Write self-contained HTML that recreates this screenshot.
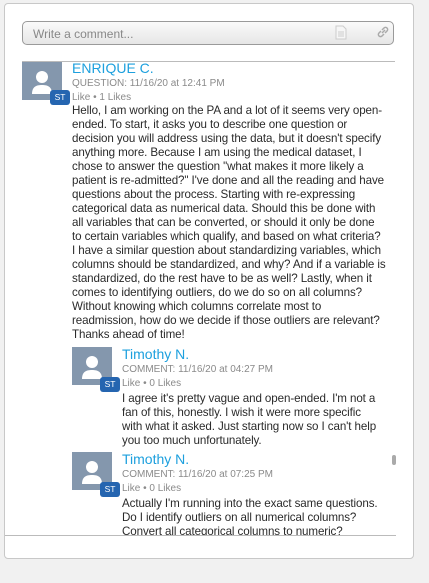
<!DOCTYPE html>
<html><head><meta charset="utf-8"><style>
body{margin:0;width:429px;height:583px;background:#f1f1f1;font-family:"Liberation Sans",sans-serif;overflow:hidden;position:relative}
.card{position:absolute;left:4px;top:3px;width:408px;height:554px;background:#fff;border:1px solid #c8c8c8;border-radius:4px}
.input{position:absolute;left:22px;top:21px;width:372px;height:24px;border:1px solid #9a9a9a;border-radius:5px;background:linear-gradient(#fafafa,#e6e6e6);box-sizing:border-box}
.input span{position:absolute;left:10px;top:5px;font-size:12px;color:#888}
.hr{position:absolute;left:22px;top:61px;width:373px;height:1px;background:#bbb}
.av{position:absolute;width:40px;height:38px;background:#8497ad}
.badge{position:absolute;width:20px;height:15px;background:#2565b0;border-radius:3px;color:#fff;font-size:8.5px;text-align:center;line-height:15px}
.name{position:absolute;color:#1da0de;font-size:14px}
.meta{position:absolute;color:#8a8a8a;font-size:10px}
.text{position:absolute;color:#2a2a2a;font-size:11.6px;line-height:14px;white-space:nowrap;letter-spacing:-0.1px}
.clip{position:absolute;left:0;top:0;width:429px;height:535px;overflow:hidden}
</style></head><body>
<div class="card"></div>
<div class="input"><span>Write a comment...</span>
<svg style="position:absolute;left:312px;top:3px" width="12" height="15" viewBox="0 0 12 15"><path d="M1 1h7l3 3v10H1z" fill="#f6f6f6" stroke="#ccc"/><path d="M3 7h6M3 9h6M3 11h6" stroke="#ccc"/></svg>
<svg style="position:absolute;left:353px;top:3px" width="14" height="14" viewBox="0 0 14 14"><path d="M6 8l3-3M5 6L3 8a2 2 0 0 0 3 3l2-2M9 8l2-2a2 2 0 0 0-3-3L6 5" fill="none" stroke="#aaa" stroke-width="1.5"/></svg>
</div>
<div class="hr"></div>
<div class="clip">
<div class="av" style="left:22px;top:62px"><svg width="40" height="38"><circle cx="20" cy="15" r="6" fill="#fff"/><path d="M10 32c0-7 4-9 10-9s10 2 10 9z" fill="#fff"/></svg></div>
<div class="badge" style="left:50px;top:90px">ST</div>
<div class="name" style="left:72px;top:60px">ENRIQUE C.</div>
<div class="meta" style="left:72px;top:78px">QUESTION: 11/16/20 at 12:41 PM</div>
<div class="meta" style="left:72px;top:92px">Like • 1 Likes</div>
<div class="text" style="left:72px;top:104px">Hello, I am working on the PA and a lot of it seems very open-<br>ended. To start, it asks you to describe one question or<br>decision you will address using the data, but it doesn't specify<br>anything more. Because I am using the medical dataset, I<br>chose to answer the question "what makes it more likely a<br>patient is re-admitted?" I've done and all the reading and have<br>questions about the process. Starting with re-expressing<br>categorical data as numerical data. Should this be done with<br>all variables that can be converted, or should it only be done<br>to certain variables which qualify, and based on what criteria?<br>I have a similar question about standardizing variables, which<br>columns should be standardized, and why? And if a variable is<br>standardized, do the rest have to be as well? Lastly, when it<br>comes to identifying outliers, do we do so on all columns?<br>Without knowing which columns correlate most to<br>readmission, how do we decide if those outliers are relevant?<br>Thanks ahead of time!</div>

<div class="av" style="left:72px;top:347px"><svg width="40" height="38"><circle cx="20" cy="15" r="6" fill="#fff"/><path d="M10 32c0-7 4-9 10-9s10 2 10 9z" fill="#fff"/></svg></div>
<div class="badge" style="left:100px;top:377px">ST</div>
<div class="name" style="left:122px;top:346px">Timothy N.</div>
<div class="meta" style="left:122px;top:364px">COMMENT: 11/16/20 at 04:27 PM</div>
<div class="meta" style="left:122px;top:378px">Like • 0 Likes</div>
<div class="text" style="left:122px;top:392px">I agree it's pretty vague and open-ended. I'm not a<br>fan of this, honestly. I wish it were more specific<br>with what it asked. Just starting now so I can't help<br>you too much unfortunately.</div>

<div class="av" style="left:72px;top:452px"><svg width="40" height="38"><circle cx="20" cy="15" r="6" fill="#fff"/><path d="M10 32c0-7 4-9 10-9s10 2 10 9z" fill="#fff"/></svg></div>
<div class="badge" style="left:100px;top:482px">ST</div>
<div class="name" style="left:122px;top:451px">Timothy N.</div>
<div class="meta" style="left:122px;top:469px">COMMENT: 11/16/20 at 07:25 PM</div>
<div class="meta" style="left:122px;top:483px">Like • 0 Likes</div>
<div class="text" style="left:122px;top:497px">Actually I'm running into the exact same questions.<br>Do I identify outliers on all numerical columns?<br>Convert all categorical columns to numeric?</div>
<div style="position:absolute;left:392px;top:455px;width:4px;height:10px;background:#aaa;border-radius:2px"></div>
</div>
<div style="position:absolute;left:5px;top:535px;width:391px;height:1px;background:#bbb"></div>
</body></html>
